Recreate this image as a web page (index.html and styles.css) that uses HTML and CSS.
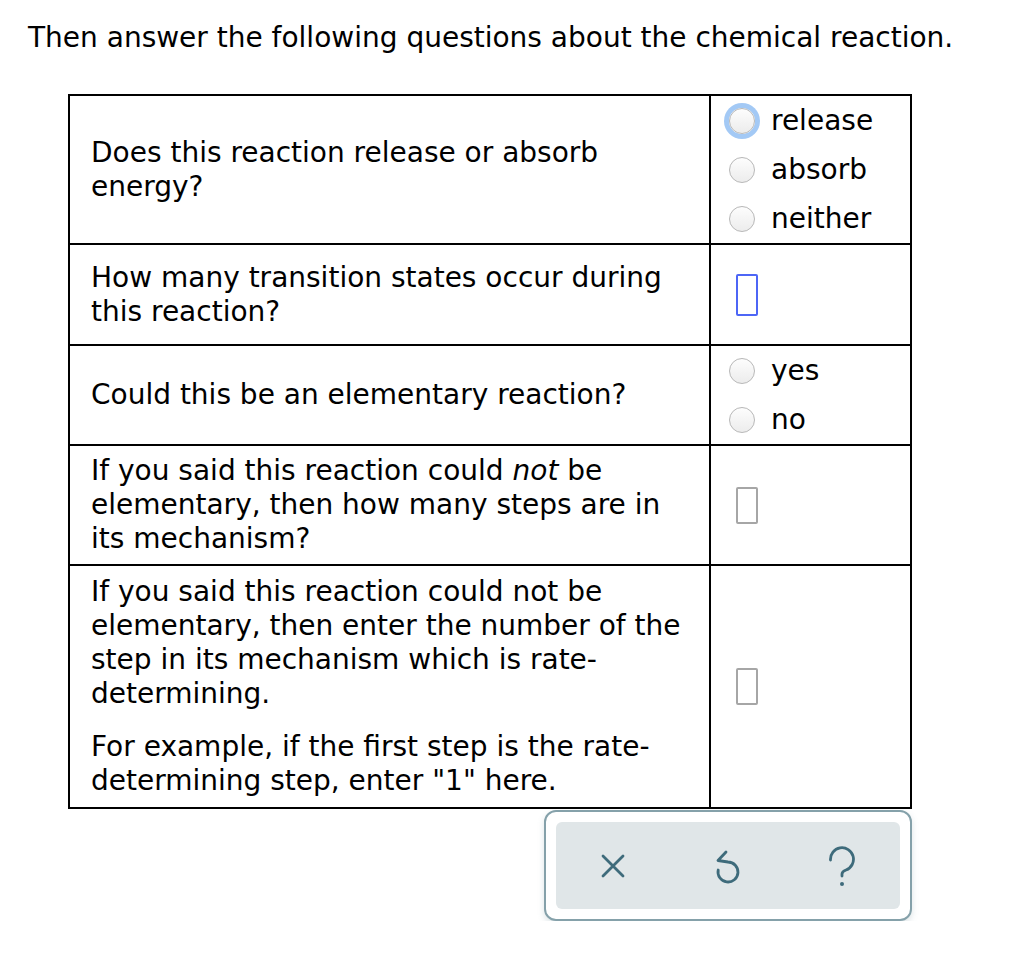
FILE: index.html
```html
<!DOCTYPE html>
<html>
<head>
<meta charset="utf-8">
<link rel="stylesheet" href="styles.css">
</head>
<body>
<p class="intro">Then answer the following questions about the chemical reaction.</p>
<table class="qtable">
  <colgroup><col class="c1"><col class="c2"></colgroup>
  <tr class="r1">
    <td class="q">Does this reaction release or absorb energy?</td>
    <td class="a">
      <div class="opts">
        <label class="opt"><span class="radio focus"></span>release</label>
        <label class="opt"><span class="radio"></span>absorb</label>
        <label class="opt"><span class="radio"></span>neither</label>
      </div>
    </td>
  </tr>
  <tr class="r2">
    <td class="q">How many transition states occur during this reaction?</td>
    <td class="a"><span class="box focus"></span></td>
  </tr>
  <tr class="r3">
    <td class="q">Could this be an elementary reaction?</td>
    <td class="a">
      <div class="opts">
        <label class="opt"><span class="radio"></span>yes</label>
        <label class="opt"><span class="radio"></span>no</label>
      </div>
    </td>
  </tr>
  <tr class="r4">
    <td class="q">If you said this reaction could <em>not</em> be elementary, then how many steps are in its mechanism?</td>
    <td class="a"><span class="box"></span></td>
  </tr>
  <tr class="r5">
    <td class="q">
      <p class="para">If you said this reaction could not be elementary, then enter the number of the step in its mechanism which is rate-determining.</p>
      <p class="para">For example, if the first step is the rate-determining step, enter "1" here.</p>
    </td>
    <td class="a"><span class="box"></span></td>
  </tr>
</table>
<div class="toolbar-wrap">
  <div class="outer">
    <div class="panel">
      <svg class="ico ico-x" width="24" height="24" viewBox="0 0 24 24"><path d="M2 2 L22 22 M22 2 L2 22" stroke="#3e6b7b" stroke-width="2.8" stroke-linecap="round" fill="none"/></svg>
      <svg class="ico ico-undo" width="30" height="36" viewBox="0 0 30 36"><path d="M13 4 L5 12.5 L15 14 A10 10 0 1 1 5.2 22" stroke="#3e6b7b" stroke-width="2.8" stroke-linecap="round" stroke-linejoin="round" fill="none"/></svg>
      <svg class="ico ico-help" width="30" height="40" viewBox="0 0 30 40"><path d="M3.5 14 A11.5 11.5 0 1 1 19 24 Q15 25.5 15 28 L15 30" stroke="#3e6b7b" stroke-width="2.8" stroke-linecap="round" stroke-linejoin="round" fill="none"/><circle cx="15" cy="38" r="2" fill="#3e6b7b"/></svg>
    </div>
  </div>
</div>
</body>
</html>
```
FILE: styles.css
```css
html, body {
  margin: 0;
  padding: 0;
  background: #ffffff;
}
body {
  font-family: "DejaVu Sans", Verdana, sans-serif;
  font-size: 28px;
  color: #000;
  width: 1036px;
}
.intro {
  margin: 0;
  padding: 21px 0 0 28px;
  line-height: 34px;
}
.qtable {
  margin: 39px 0 0 68px;
  border-collapse: collapse;
  table-layout: fixed;
  width: 842px;
}
.c1 { width: 641px; }
.c2 { width: 201px; }
.qtable td {
  border: 2px solid #000;
  vertical-align: middle;
  line-height: 34px;
}
.q {
  padding: 0 17px 0 21px;
}
.a {
  padding: 0 18px;
}
.r1 td { height: 147px; }
.r2 td { height: 99px; }
.r3 td { height: 98px; }
.r4 td { height: 118px; }
.r5 td { height: 241px; }
.opts {
  display: flex;
  flex-direction: column;
  gap: 15px;
}
.opt {
  display: flex;
  align-items: center;
  gap: 16px;
  height: 34px;
}
.radio {
  width: 26px;
  height: 26px;
  border-radius: 50%;
  border: 1px solid #b8b8b8;
  background: linear-gradient(#fdfdfd, #ececec);
  box-sizing: border-box;
  flex: none;
}
.radio.focus {
  box-shadow: 0 0 0 5px #a3c9f5;
}
.box {
  display: block;
  margin-left: 7px;
  width: 22px;
  height: 37px;
  border: 2px solid #a6a6a6;
  border-radius: 2px;
  box-sizing: border-box;
}
.box.focus {
  border-color: #4d66f6;
  height: 42px;
}
.para {
  margin: 0;
}
.para + .para {
  margin-top: 19px;
}
.toolbar-wrap {
  width: 912px;
  display: flex;
  justify-content: flex-end;
}
.outer {
  margin-top: 1px;
  width: 368px;
  height: 111px;
  box-sizing: border-box;
  border: 2px solid #85a1aa;
  border-radius: 12px;
  padding: 10px;
  background: #fff;
  box-shadow: 0 3px 6px rgba(120,150,160,0.25);
}
.panel {
  height: 100%;
  background: #e0e6e8;
  border-radius: 6px;
  display: flex;
  align-items: center;
  padding-left: 45px;
}
.ico { flex: none; display: block; }
.ico-undo { margin-left: 88px; }
.ico-help { margin-left: 84px; }
```
